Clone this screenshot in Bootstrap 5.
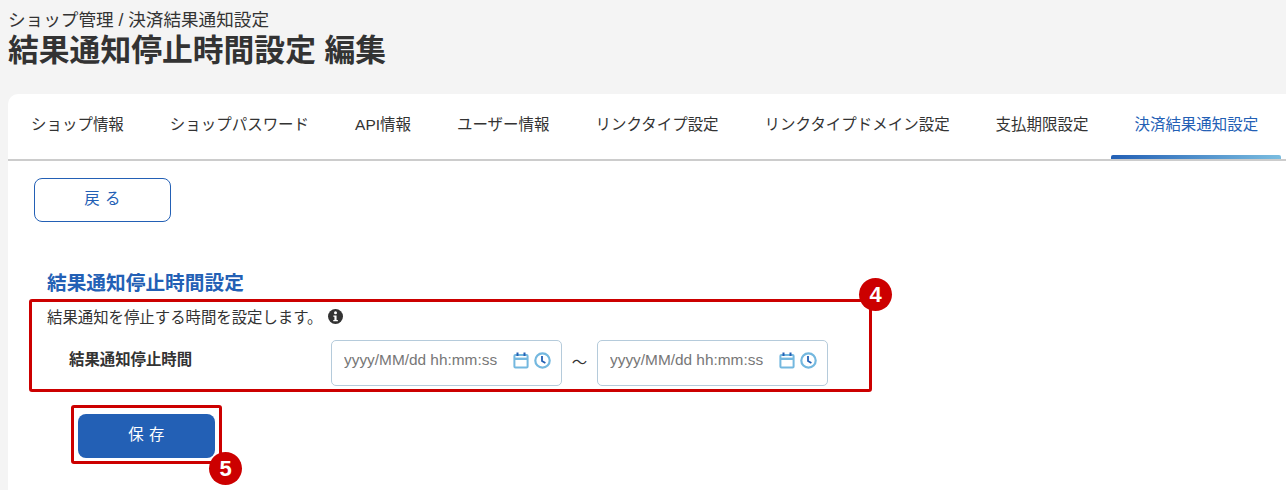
<!DOCTYPE html>
<html lang="ja">
<head>
<meta charset="utf-8">
<title>結果通知停止時間設定 編集</title>
<link href="https://cdn.jsdelivr.net/npm/bootstrap@5.3.0/dist/css/bootstrap.min.css" rel="stylesheet">
<style>
html,body{height:100%;overflow:hidden}
body{background:#f4f4f4;color:#333;font-family:"Liberation Sans","Noto Sans CJK JP",sans-serif;font-size:15.4px;padding-left:8px}
.crumb{font-size:17.6px;line-height:22px;padding-top:9px}
.page-title{font-size:30.8px;line-height:40px;font-weight:700;margin:0 0 23px}
.sheet{background:#fff;border-radius:10px 0 0 0;height:420px}
.tabs{border-bottom:2px solid #ccc;height:67px;flex-wrap:nowrap}
.tabs .nav-link{color:#333;font-size:15.47px;line-height:22px;padding:20px 23px 23px;height:65px;white-space:nowrap;position:relative}
.tabs .nav-link.active{color:#2360b5}
.tabs .nav-link.active::after{content:"";position:absolute;left:0;right:0;bottom:0;height:4px;border-radius:2px 2px 0 0;background:linear-gradient(90deg,#2360b5,#7abde0)}
.sheet-body{padding:17px 26px}
.btn-back,.btn-save{width:137px;height:44px;border-radius:8px;font-size:15.4px;letter-spacing:.5px;padding:0 0 2px}
.btn-back{border:1px solid #2360b5;color:#2360b5;background:#fff}
.btn-save{background:#2360b5;color:#fff;border:0}
.sec-title{color:#2360b5;font-size:19.7px;line-height:26px;font-weight:700;margin:48px 0 3px 13px}
.mark-box{border:3px solid #c00;border-radius:3px;position:relative}
.box-a{margin-left:-5px;width:843px;height:93px;padding:6px 15px}
.box-b{margin:13px 0 0 37px;width:151px;height:59px;padding:6px 4px}
.note{font-size:15.4px;line-height:20px}
.info-ic{margin-left:5px;vertical-align:-1px}
.fld-row{margin-top:12px}
.fld-label{font-size:15.4px;font-weight:700;width:284px;padding:0 0 7px 22px}
.dt{width:231px;height:46px}
.dt .form-control{height:46px;border:1px solid #b5cbdb;border-radius:5px;padding:0 12px 6px;font-size:15.4px;font-family:inherit}
.dt .form-control::placeholder{color:#777;opacity:1}
.dt-ics{position:absolute;right:11px;top:12px;gap:5px}
.tilde{width:35px;text-align:center;font-size:15.4px}
.num{position:absolute;width:33px;height:33px;border-radius:50%;background:#c00;color:#fff;font-weight:700;font-size:22px;line-height:33px;text-align:center}
.num-4{right:-23px;top:-24px}
.num-5{right:-23px;top:44px}
</style>
</head>
<body>
<div class="crumb">ショップ管理 / 決済結果通知設定</div>
<h1 class="page-title">結果通知停止時間設定 編集</h1>
<div class="sheet">
  <ul class="nav tabs">
    <li class="nav-item"><a class="nav-link" href="#">ショップ情報</a></li>
    <li class="nav-item"><a class="nav-link" href="#">ショップパスワード</a></li>
    <li class="nav-item"><a class="nav-link" href="#">API情報</a></li>
    <li class="nav-item"><a class="nav-link" href="#">ユーザー情報</a></li>
    <li class="nav-item"><a class="nav-link" href="#">リンクタイプ設定</a></li>
    <li class="nav-item"><a class="nav-link" href="#">リンクタイプドメイン設定</a></li>
    <li class="nav-item"><a class="nav-link" href="#">支払期限設定</a></li>
    <li class="nav-item"><a class="nav-link active" href="#">決済結果通知設定</a></li>
  </ul>
  <div class="sheet-body">
    <button type="button" class="btn btn-back">戻 る</button>
    <h2 class="sec-title">結果通知停止時間設定</h2>
    <div class="mark-box box-a">
      <div class="note">結果通知を停止する時間を設定します。<svg class="info-ic" width="15" height="15" viewBox="0 0 14 14"><circle cx="7" cy="7" r="7" fill="#333"/><circle cx="7" cy="3.6" r="1.4" fill="#fff"/><path d="M5 6h3v4.2h1.2v1.3H4.9v-1.3H6V7.3H5z" fill="#fff"/></svg></div>
      <div class="d-flex align-items-center fld-row">
        <div class="fld-label">結果通知停止時間</div>
        <div class="dt position-relative">
          <input class="form-control" type="text" placeholder="yyyy/MM/dd hh:mm:ss">
          <div class="dt-ics d-flex align-items-center">
            <svg width="16" height="17" viewBox="0 0 16 17" fill="none" stroke="#74b8df" stroke-width="2"><rect x="1.4" y="3" width="13.2" height="12.6" rx="1"/><path d="M1 6.8h14" stroke-width="2.4"/><path d="M4.5.5v3.5M11.5.5v3.5" stroke="#2360b5"/></svg>
            <svg width="17" height="17" viewBox="0 0 17 17" fill="none"><circle cx="8.5" cy="8.5" r="7.2" stroke="#74b8df" stroke-width="2.2"/><path d="M8 4v5l3.4 2" stroke="#2360b5" stroke-width="1.8"/></svg>
          </div>
        </div>
        <div class="tilde">〜</div>
        <div class="dt position-relative">
          <input class="form-control" type="text" placeholder="yyyy/MM/dd hh:mm:ss">
          <div class="dt-ics d-flex align-items-center">
            <svg width="16" height="17" viewBox="0 0 16 17" fill="none" stroke="#74b8df" stroke-width="2"><rect x="1.4" y="3" width="13.2" height="12.6" rx="1"/><path d="M1 6.8h14" stroke-width="2.4"/><path d="M4.5.5v3.5M11.5.5v3.5" stroke="#2360b5"/></svg>
            <svg width="17" height="17" viewBox="0 0 17 17" fill="none"><circle cx="8.5" cy="8.5" r="7.2" stroke="#74b8df" stroke-width="2.2"/><path d="M8 4v5l3.4 2" stroke="#2360b5" stroke-width="1.8"/></svg>
          </div>
        </div>
      </div>
      <span class="num num-4">4</span>
    </div>
    <div class="mark-box box-b">
      <button type="button" class="btn btn-save">保 存</button>
      <span class="num num-5">5</span>
    </div>
  </div>
</div>
<script src="https://cdn.jsdelivr.net/npm/bootstrap@5.3.0/dist/js/bootstrap.bundle.min.js"></script>
</body>
</html>
